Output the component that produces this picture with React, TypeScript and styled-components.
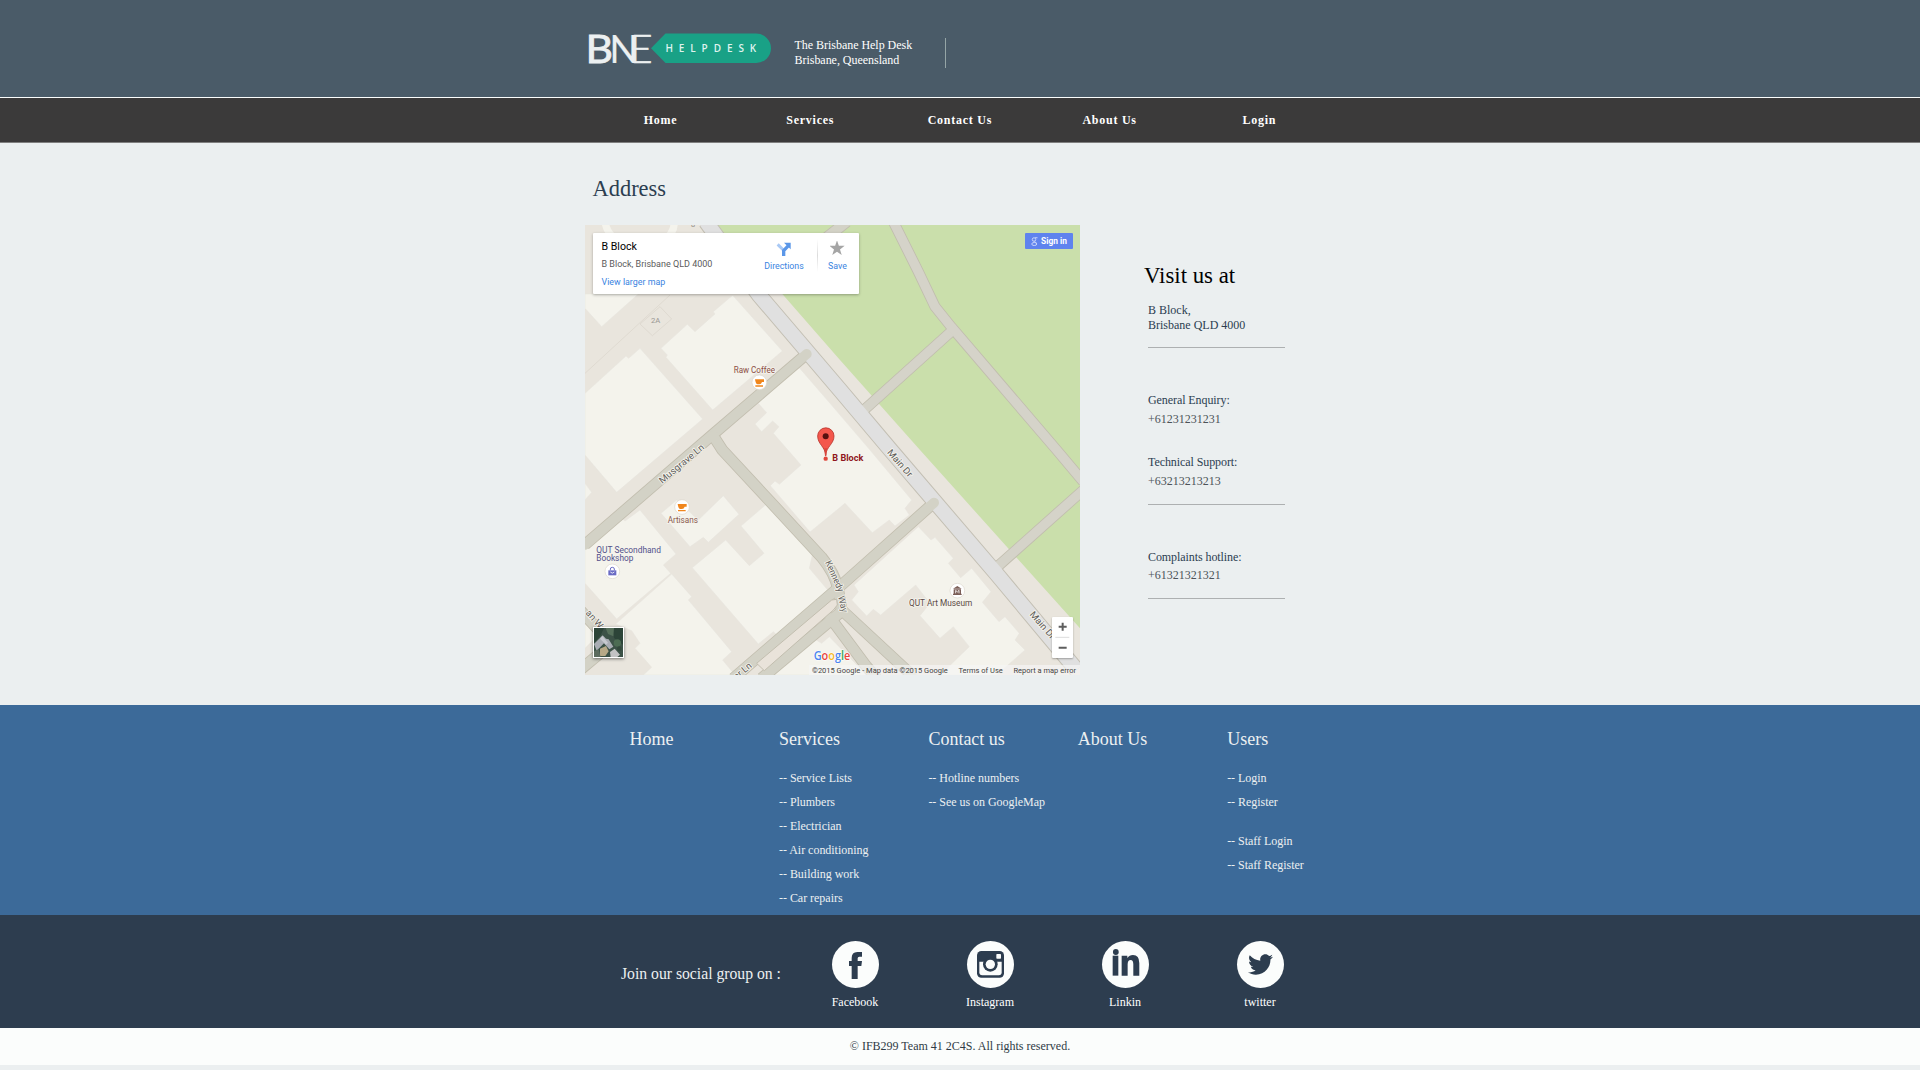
import React from "react";
import styled, { createGlobalStyle } from "styled-components";
import { FaTwitter } from "react-icons/fa";

const GlobalStyle = createGlobalStyle`
  * { box-sizing: border-box; }
  body {
    margin: 0;
    background: #ebeff0;
    font-family: "Liberation Serif", "Times New Roman", serif;
    font-size: 12px;
    line-height: 15px;
  }
`;

const Page = styled.div`
  min-height: 1070px;
  display: flex;
  flex-direction: column;
`;

const Container = styled.div`
  width: 750px;
  margin: 0 auto;
  display: flex;
`;

/* ---------- header ---------- */

const Header = styled.header`
  height: 98px;
  background: #4a5b68;
  border-bottom: 1px solid #fbfdfc;
`;

const Brand = styled.div`
  width: 209.5px;
  padding: 32px 0 0 3px;
`;

const LogoArt = styled.svg`
  display: block;
  overflow: visible;
`;

const Tagline = styled.div`
  height: 30px;
  margin-top: 38px;
  width: 151.5px;
  color: #fff;
  border-right: 1px solid #95a5a6;
  letter-spacing: -0.03px;
  white-space: nowrap;
`;

const NavBar = styled.nav`
  height: 45px;
  background: #3b3a3a;
  border-bottom: 1px solid #7f7f7f;
`;

const NavContainer = styled(Container)`
  padding-left: 0.7px;
`;

const NavItem = styled.a`
  width: 149.7px;
  flex: none;
  line-height: 44px;
  text-align: center;
  color: #fff;
  font-weight: bold;
  letter-spacing: 0.75px;
`;

/* ---------- main ---------- */

const Main = styled.main`
  height: 562px;
`;

const Title = styled.h1`
  margin: 0;
  padding: 32px 0 0 7.6px;
  height: 82px;
  font-size: 22.4px;
  line-height: 28px;
  font-weight: normal;
  color: #2c3e50;
`;

const MapFrame = styled.section`
  position: relative;
  width: 495px;
  height: 450px;
  overflow: hidden;
  background: #e9e5dc;
  font-family: Roboto, sans-serif;
`;

const MapCanvas = styled.svg`
  display: block;
  width: 495px;
  height: 450px;
`;

const PlaceCard = styled.div`
  position: absolute;
  left: 8px;
  top: 8px;
  width: 266px;
  height: 61px;
  display: flex;
  background: #fff;
  border-radius: 1px;
  box-shadow: 0 1px 3px rgba(0, 0, 0, 0.3);
  white-space: nowrap;
`;

const PlaceInfo = styled.div`
  width: 165px;
  padding: 5px 0 0 8.5px;
`;

const PlaceName = styled.div`
  font-size: 10.6px;
  line-height: 17px;
  color: #000;
`;

const PlaceAddress = styled.div`
  font-size: 9px;
  line-height: 18px;
  color: #5b5b5b;
`;

const MapLink = styled.a`
  display: block;
  font-size: 8.9px;
  line-height: 18px;
  color: #3a84df;
`;

const CardAction = styled.a<{ $width: number }>`
  width: ${(p) => p.$width}px;
  padding-top: 8px;
  display: flex;
  flex-direction: column;
  align-items: center;
  font-size: 8.8px;
  line-height: 18px;
  color: #3a84df;
  svg { display: block; height: 16px; }
`;

const CardDivider = styled.div`
  width: 1px;
  height: 33px;
  margin: 6px 0 0 7px;
  background: linear-gradient(#fff, #dcdcdc 50%, #fff);
`;

const SignIn = styled.button`
  position: absolute;
  left: 440px;
  top: 8px;
  width: 48px;
  height: 16px;
  padding: 0;
  border: 0;
  border-radius: 1px;
  background: #5f83ee;
  color: #fff;
  font: bold 8.4px/16px Roboto, sans-serif;
  display: flex;
  align-items: center;
  justify-content: center;
  gap: 3px;
`;

const ZoomControl = styled.div`
  position: absolute;
  left: 467px;
  top: 392px;
  width: 21px;
  height: 41px;
  background: #fff;
  border-radius: 1px;
  box-shadow: 0 1px 2px rgba(0, 0, 0, 0.3);
`;

const Thumbnail = styled.div`
  position: absolute;
  left: 8px;
  top: 402px;
  width: 31px;
  height: 31px;
  border: 1px solid #fff;
  box-shadow: 0 1px 3px rgba(0, 0, 0, 0.5);
  svg { display: block; }
`;

const MapFooter = styled.div`
  position: absolute;
  right: 0;
  bottom: 0;
  height: 10px;
  width: 271px;
  padding: 0 4px 0 3px;
  display: flex;
  justify-content: space-between;
  background: rgba(245, 245, 245, 0.7);
  color: #444;
  font-size: 7.5px;
  line-height: 11px;
  white-space: nowrap;
`;

/* ---------- contact column ---------- */

const Contact = styled.aside`
  width: 192px;
  flex: none;
  margin-left: 68px;
  padding-top: 119px;
  color: #2c3e50;
`;

const ContactTitle = styled.h2`
  margin: 0 0 13px -4px;
  font-size: 22.8px;
  line-height: 28px;
  font-weight: normal;
  color: #000;
`;

const ContactGroup = styled.div<{ $top?: number; $bottom?: number }>`
  width: 137px;
  margin-top: ${(p) => p.$top ?? 0}px;
  padding-bottom: ${(p) => p.$bottom ?? 14}px;
  border-bottom: 1px solid #adb0b1;
`;

const Phone = styled.p<{ $top?: number; $gap?: number }>`
  margin: ${(p) => p.$top ?? 0}px 0 0;
  letter-spacing: -0.08px;
  span { display: block; margin-top: ${(p) => p.$gap ?? 4}px; color: #4c5358; letter-spacing: 0; }
`;

/* ---------- site map ---------- */

const SiteMap = styled.section`
  height: 210px;
  background: #3c6a99;
  color: #ecf0f1;
`;

const SiteContainer = styled(Container)`
  padding-left: 44.6px;
`;

const SiteColumn = styled.div`
  width: 149.4px;
  flex: none;
  padding-top: 22px;
  white-space: nowrap;
`;

const SiteHeading = styled.h3`
  margin: 0 0 17px;
  font-size: 18px;
  line-height: 24px;
  font-weight: normal;
`;

const SiteLink = styled.a<{ $spaced?: boolean }>`
  display: block;
  line-height: 20px;
  margin-bottom: 4px;
  margin-top: ${(p) => (p.$spaced ? 19 : 0)}px;
  letter-spacing: -0.03px;
`;

/* ---------- social ---------- */

const Social = styled.section`
  height: 113px;
  background: #2d3d4f;
  color: #fff;
`;

const SocialLabel = styled.div`
  width: 166.5px;
  flex: none;
  padding-top: 49px;
  margin-left: 36px;
  font-size: 15.7px;
  line-height: 20px;
  color: #ecf0f1;
  white-space: nowrap;
`;

const SocialItem = styled.a`
  width: 135px;
  flex: none;
  padding-top: 26px;
  display: flex;
  flex-direction: column;
  align-items: center;
`;

const Disc = styled.div<{ $x?: number; $y?: number }>`
  width: 47px;
  height: 47px;
  margin-bottom: 7px;
  border-radius: 50%;
  background: #fbfdfc;
  color: #2d3d4f;
  display: flex;
  align-items: center;
  justify-content: center;
  svg { display: block; transform: translate(${(p) => p.$x ?? 0}px, ${(p) => p.$y ?? 0}px); }
`;

const Copyright = styled.footer`
  height: 37px;
  line-height: 37px;
  background: #fbfdfc;
  color: #2f3b45;
  text-align: center;
`;

function Logo() {
  return (
    <LogoArt width="184" height="34" viewBox="588 32 184 34">
      <g fill="#ecf0f1" stroke="#ecf0f1" fontFamily="Lato, sans-serif" fontSize="39.5">
        <text x="585.4" y="62.6" strokeWidth="0.8" textLength="27.5" lengthAdjust="spacingAndGlyphs">B</text>
        <text x="609.6" y="62.6" strokeWidth="0.2" textLength="28.6" lengthAdjust="spacingAndGlyphs">N</text>
        <text x="630" y="62.6" strokeWidth="0.5" fontWeight="300" textLength="22.6" lengthAdjust="spacingAndGlyphs">E</text>
      </g>
      <path d="M651 48.3 L665.5 33.6 H756.3 A14.7 14.7 0 0 1 756.3 63 H665.5 Z" fill="#19a186" />
      <text x="665.4" y="51.6" fill="#dff3ee" fontFamily="'Open Sans', sans-serif" fontSize="10" fontWeight="600" letterSpacing="5.9">
        HELPDESK
      </text>
    </LogoArt>
  );
}

const BUILDINGS = [
  "15,222 175,222 65,320 15,265",
  "243,385 322,313 345,335 405,282 400,275 458,226 607,393 398,570 258,412 262,405",
  "15,520 138,408 146,415 180,385 368,597 110,817 15,705",
  "15,790 35,817 15,840",
  "655,440 620,475 612,470 572,500 578,510 535,550 560,578 525,612 545,635 578,603 597,620 580,640 663,735 598,793 585,783 571,797 690,936 795,850 877,938 928,900 945,918 988,885 975,865 995,840 870,690 750,550",
  "243,880 290,840 355,900 430,827 477,883 385,967 370,952 330,980",
  "15,980 120,890 135,903 180,870 288,1002 250,1035 272,1060 110,1197 15,1090",
  "275,1062 335,1130 325,1140 455,1295 428,1320 465,1365 190,1365 215,1342 165,1285 180,1270 155,1232 107,1212",
  "337,1043 437,960 508,1037 552,1000 483,918 562,850 697,1005 688,1045 743,1110 597,1250 580,1235 535,1272",
  "1015,920 1053,960 1065,952 1120,1015 1105,1030 1142,1073 1175,1045 1233,1115 1207,1147 1257,1205 1275,1190 1318,1240 1305,1260 1335,1290 1250,1365 1080,1365 1168,1280 1120,1220 1080,1255 1020,1187 1050,1150 1007,1095 902,1185 880,1168 860,1188 815,1140 835,1115 822,1095",
  "570,1365 700,1255 725,1270 748,1250 860,1365",
  "15,1210 52,1248 15,1285",
];

const LANES = [
  "M680 402 L400 642 L15 974",
  "M400 648 L427 690 L580 855 L725 1012 Q765 1060 775 1110 L785 1170",
  "M1062 848 L788 1092 L460 1375",
  "M780 1178 L545 1375",
  "M785 1170 L995 1365",
  "M752 1195 L860 1340 L890 1375",
  "M0 1170 L60 1235 M0 1350 L60 1300",
  "M700 85 L800 5",
];

const PARK_PATHS = [
  "M940 5 L1015 155 L1065 260 L1115 322 L1430 690 L1510 785",
  "M1112 336 L852 570",
  "M1510 810 L1250 1042",
];

const MAIN_DR = "M378 5 L537 225 L780 510 L930 688 L1250 1062 L1490 1350";

function Cup({ x, y }: { x: number; y: number }) {
  return (
    <g transform={`translate(${x} ${y})`}>
      <circle r="22" fill="#fff" stroke="#ddd6cc" strokeWidth="2" />
      <path d="M-13 -9 H14 V-1 H8 Q6 6 0 6 H-5 Q-11 6 -13 -9 Z M-12 9 H11 V13 H-12 Z" fill="#f0861c" />
    </g>
  );
}

const HALO = { stroke: "#f5f4ed", strokeWidth: 5, paintOrder: "stroke" } as const;

function MapDrawing() {
  return (
    <MapCanvas viewBox="15 15 1485 1350">
      <rect x="15" y="15" width="1485" height="1350" fill="#e9e5dd" />
      <path d="M75 5 Q80 40 110 60 M282 5 Q285 40 250 60" fill="none" stroke="#f4f3ec" strokeWidth="22" />
      <path d="M405 15 L607 222 L780 420 L1020 690 L1500 1225 V15 Z" fill="#cadfab" />
      <g fill="#f4f3ec" stroke="#e7e5de" strokeWidth="1.5">
        {BUILDINGS.map((points) => <polygon key={points} points={points} />)}
      </g>
      <path d="M15 460 L270 225 M180 312 L240 260 L275 297 L217 347 Z" fill="none" stroke="#dfdad1" strokeWidth="3" />
      <g fill="none" strokeLinejoin="round">
        <g stroke="#c1bdae" strokeWidth="33">{PARK_PATHS.map((d) => <path key={d} d={d} />)}</g>
        <path d={MAIN_DR} stroke="#c3bfb3" strokeWidth="49" />
        <g stroke="#c2beaf" strokeWidth="35">{LANES.map((d) => <path key={d} d={d} />)}</g>
        <g stroke="#d5d3c9" strokeWidth="28">{PARK_PATHS.map((d) => <path key={d} d={d} />)}</g>
        <path d={MAIN_DR} stroke="#e0e0e0" strokeWidth="43" />
        <g stroke="#d3d2c6" strokeWidth="30" strokeLinecap="round">{LANES.map((d) => <path key={d} d={d} />)}</g>
      </g>
      <path d="M530 1330 L755 1140 L770 1138 L772 1155 L760 1170 L553 1352 Z" fill="#e9e3da" stroke="#c2beaf" strokeWidth="3" />
      <g fontSize="28" fill="#5f5d5a" {...HALO}>
        <text transform="translate(247 792) rotate(-40)" textLength="167" lengthAdjust="spacingAndGlyphs">Musgrave Ln</text>
        <text transform="translate(920 698) rotate(49)" textLength="100" lengthAdjust="spacingAndGlyphs">Main Dr</text>
        <text transform="translate(1348 1184) rotate(49)" textLength="100" lengthAdjust="spacingAndGlyphs">Main Dr</text>
        <text transform="translate(735 1027) rotate(66)" textLength="99" lengthAdjust="spacingAndGlyphs">Kennedy</text>
        <text transform="translate(774 1130) rotate(76)" textLength="50" lengthAdjust="spacingAndGlyphs">Way</text>
        <text transform="translate(470 1380) rotate(-40)">er Ln</text>
        <text transform="translate(16 1180) rotate(49)">an W</text>
      </g>
      <text x="333" y="21" fontSize="22" fill="#8d8a85">8</text>
      <text x="213" y="310" fontSize="23" fill="#9a9894" textLength="28">2A</text>
      <g fontSize="25" {...HALO}>
        <text x="461" y="458" fill="#8b4e43" textLength="124" lengthAdjust="spacingAndGlyphs">Raw Coffee</text>
        <text x="263" y="909" fill="#8b5a4f" textLength="91" lengthAdjust="spacingAndGlyphs">Artisans</text>
        <text x="49" y="998" fill="#52508a" textLength="194" lengthAdjust="spacingAndGlyphs">QUT Secondhand</text>
        <text x="49" y="1024" fill="#52508a" textLength="111" lengthAdjust="spacingAndGlyphs">Bookshop</text>
        <text x="987" y="1158" fill="#5b4a45" textLength="190" lengthAdjust="spacingAndGlyphs">QUT Art Museum</text>
        <text x="757" y="723" fill="#8f1620" fontWeight="bold" textLength="93" lengthAdjust="spacingAndGlyphs">B Block</text>
      </g>
      <Cup x={538} y={487} />
      <Cup x={306} y={861} />
      <g transform="translate(97 1054)">
        <circle r="22" fill="#fff" stroke="#ddd6cc" strokeWidth="2" />
        <path d="M-12 -3 H12 V12 H-12 Z" fill="#6a6bc4" />
        <path d="M-6 -3 V-7 Q-6 -12 0 -12 Q6 -12 6 -7 V-3" fill="none" stroke="#6a6bc4" strokeWidth="3" />
        <path d="M-6 2 Q0 9 6 2" fill="none" stroke="#fff" strokeWidth="2.5" />
      </g>
      <g transform="translate(1132 1112)">
        <circle r="22" fill="#fff" stroke="#ddd6cc" strokeWidth="2" />
        <path d="M-13 -6 L0 -14 L13 -6 Z M-11 -4 H11 V9 H-11 Z M-13 9 H13 V13 H-13 Z" fill="#7b5e57" />
        <path d="M-5 8 V-1 L0 4 L5 -1 V8" fill="none" stroke="#fff" strokeWidth="2.5" />
      </g>
      <path d="M737 705 C735 680 713 672 713 648 A24.500 24.500 0 0 1 762 648 C762 672 739 680 737 705 Z" fill="#f4574c" stroke="#b8352e" strokeWidth="2.500" />
      <circle cx="737" cy="649" r="9" fill="#56110f" />
      <path d="M733 685 H741 L739 708 H735 Z" fill="#d9453c" />
      <circle cx="737" cy="716" r="6.500" fill="#e0463c" />
      <text
        x="701" y="1320" textLength="110" lengthAdjust="spacingAndGlyphs"
        fontFamily="'Open Sans', sans-serif" fontSize="35" fontWeight="600"
        strokeLinejoin="round" stroke="#fff" strokeWidth="3" paintOrder="stroke"
      >
        <tspan fill="#4a86f0">G</tspan><tspan fill="#e8453c">o</tspan><tspan fill="#f6b91f">o</tspan><tspan fill="#4a86f0">g</tspan><tspan fill="#35a655">l</tspan><tspan fill="#e8453c">e</tspan>
      </text>
    </MapCanvas>
  );
}

function AerialThumb() {
  return (
    <Thumbnail>
      <svg width="29" height="29" viewBox="0 0 87 87">
        <rect width="87" height="87" fill="#3c5247" />
        <path d="M0 0 H30 L20 22 L0 45 Z M55 0 H87 V50 L60 30 Z" fill="#2c4438" />
        <path d="M35 0 L60 0 L58 25 L42 18 Z" fill="#56705b" />
        <path d="M0 48 L26 22 L36 32 L44 34 L58 56 L46 64 L30 46 L8 68 Z" fill="#a9adb4" />
        <path d="M25 24 L42 44 L36 50 L18 32 Z" fill="#c6c9cf" />
        <path d="M18 62 L36 54 L44 70 L34 84 H18 Z" fill="#b7a987" />
        <path d="M48 72 L62 62 L78 80 L70 87 H50 Z" fill="#c3c3c4" />
        <path d="M0 70 L14 64 L20 87 H0 Z" fill="#5c6b5e" />
        <circle cx="70" cy="45" r="11" fill="#4c6c53" />
        <circle cx="76" cy="62" r="7" fill="#33493c" />
      </svg>
    </Thumbnail>
  );
}

function FacebookGlyph() {
  return (
    <svg width="13" height="27" viewBox="0 0 39 81" fill="#2d3d4f">
      <path d="M8 81 V42 H0 V27 H8 V18 Q8 0 25 0 H39 V14 H31 Q26 14 26 19 V27 H39 L37 42 H26 V81 Z" />
    </svg>
  );
}

function InstagramGlyph() {
  return (
    <svg width="27" height="27" viewBox="0 0 81 81">
      <rect width="81" height="80" rx="13" fill="#2d3d4f" />
      <path d="M7 32 H74 V64 Q74 73 65 73 H16 Q7 73 7 64 Z" fill="#fbfdfc" />
      <circle cx="40" cy="40" r="22" fill="#2d3d4f" />
      <circle cx="40" cy="40" r="14" fill="#fbfdfc" />
      <rect x="58" y="9" width="14" height="14" rx="2" fill="#fbfdfc" />
    </svg>
  );
}

function LinkedInGlyph() {
  return (
    <svg width="27.300" height="27" viewBox="0 0 82 81" fill="#2d3d4f">
      <circle cx="11.500" cy="9" r="8.700" />
      <path d="M2 20 H19 V80 H2 Z" />
      <path d="M29 20 H46 V27 Q52 18 63 18 Q82 18 82 42 V80 H64 V46 Q64 33 56 33 Q47 33 47 46 V80 H29 Z" />
    </svg>
  );
}

const NAV = ["Home", "Services", "Contact Us", "About Us", "Login"];

const SITE_COLUMNS: { title: string; links: { text: string; spaced?: boolean }[] }[] = [
  { title: "Home", links: [] },
  {
    title: "Services",
    links: ["Service Lists", "Plumbers", "Electrician", "Air conditioning", "Building work", "Car repairs"].map((text) => ({ text })),
  },
  { title: "Contact us", links: [{ text: "Hotline numbers" }, { text: "See us on GoogleMap" }] },
  { title: "About Us", links: [] },
  {
    title: "Users",
    links: [{ text: "Login" }, { text: "Register" }, { text: "Staff Login", spaced: true }, { text: "Staff Register" }],
  },
];

export default function App() {
  return (
    <Page>
      <GlobalStyle />
      <Header>
        <Container>
          <Brand><Logo /></Brand>
          <Tagline>The Brisbane Help Desk<br />Brisbane, Queensland</Tagline>
        </Container>
      </Header>
      <NavBar>
        <NavContainer>{NAV.map((item) => <NavItem key={item}>{item}</NavItem>)}</NavContainer>
      </NavBar>
      <Main>
        <Container>
          <div>
            <Title>Address</Title>
            <MapFrame>
              <MapDrawing />
              <PlaceCard>
                <PlaceInfo>
                  <PlaceName>B Block</PlaceName>
                  <PlaceAddress>B Block, Brisbane QLD 4000</PlaceAddress>
                  <MapLink>View larger map</MapLink>
                </PlaceInfo>
                <CardAction $width={52}>
                  <svg width="16" height="16" viewBox="0 0 48 48">
                    <path d="M5 10 L22 27" stroke="#a9c9f5" strokeWidth="9" />
                    <path d="M23 45 V29 L38 13" fill="none" stroke="#5b97e8" strokeWidth="10" />
                    <path d="M24 5 H44 V25 Z" fill="#5b97e8" />
                  </svg>
                  Directions
                </CardAction>
                <CardDivider />
                <CardAction $width={39}>
                  <svg width="16" height="16" viewBox="0 0 24 24">
                    <path d="M10.500 -1 L13.300 7.300 H22 L15 12.600 L17.600 21 L10.500 16 L3.400 21 L6 12.600 L-1 7.300 H7.700 Z" fill="#a5a5a5" />
                  </svg>
                  Save
                </CardAction>
              </PlaceCard>
              <SignIn>
                <svg width="7" height="9" viewBox="0 0 14 18" fill="none" stroke="#c9d5fa" strokeWidth="2">
                  <circle cx="6" cy="5" r="3.500" />
                  <path d="M8 1.500 H13 M7 9 L11 12" />
                  <ellipse cx="6.500" cy="14" rx="5" ry="3" />
                </svg>
                Sign in
              </SignIn>
              <AerialThumb />
              <ZoomControl>
                <svg width="21" height="41" viewBox="0 0 63 123">
                  <path d="M20 29 H44 M32 17 V41 M20 92 H44" stroke="#5e5e5e" strokeWidth="6" />
                  <path d="M10 61 H52" stroke="#dcdcdc" strokeWidth="3" />
                </svg>
              </ZoomControl>
              <MapFooter>
                <span>©2015 Google - Map data ©2015 Google</span>
                <span>Terms of Use</span>
                <span>Report a map error</span>
              </MapFooter>
            </MapFrame>
          </div>
          <Contact>
            <ContactTitle>Visit us at</ContactTitle>
            <ContactGroup>B Block,<br />Brisbane QLD 4000</ContactGroup>
            <ContactGroup $top={45} $bottom={15}>
              <Phone>General Enquiry:<span>+61231231231</span></Phone>
              <Phone $top={28}>Technical Support:<span>+63213213213</span></Phone>
            </ContactGroup>
            <ContactGroup $top={45} $bottom={15}>
              <Phone $gap={3}>Complaints hotline:<span>+61321321321</span></Phone>
            </ContactGroup>
          </Contact>
        </Container>
      </Main>
      <SiteMap>
        <SiteContainer>
          {SITE_COLUMNS.map((column) => (
            <SiteColumn key={column.title}>
              <SiteHeading>{column.title}</SiteHeading>
              {column.links.map((link) => (
                <SiteLink key={link.text} $spaced={link.spaced}>-- {link.text}</SiteLink>
              ))}
            </SiteColumn>
          ))}
        </SiteContainer>
      </SiteMap>
      <Social>
        <Container>
          <SocialLabel>Join our social group on :</SocialLabel>
          <SocialItem><Disc $y={1}><FacebookGlyph /></Disc>Facebook</SocialItem>
          <SocialItem><Disc><InstagramGlyph /></Disc>Instagram</SocialItem>
          <SocialItem><Disc $x={1} $y={-2}><LinkedInGlyph /></Disc>Linkin</SocialItem>
          <SocialItem><Disc><FaTwitter size={25} /></Disc>twitter</SocialItem>
        </Container>
      </Social>
      <Copyright>© IFB299 Team 41 2C4S. All rights reserved.</Copyright>
    </Page>
  );
}
